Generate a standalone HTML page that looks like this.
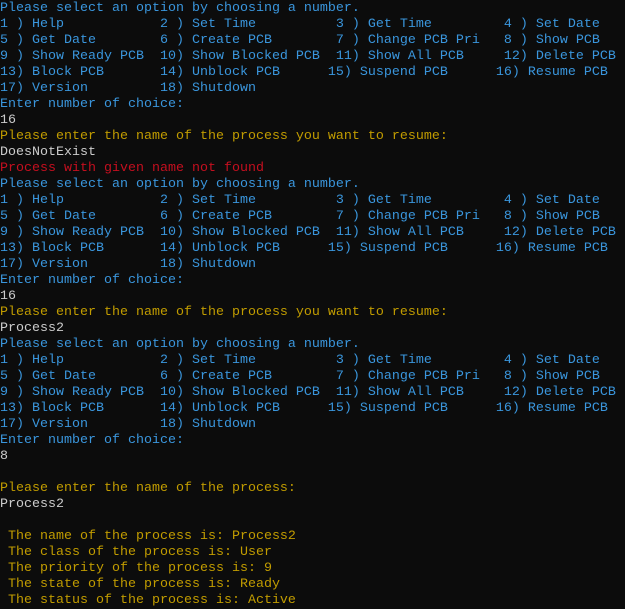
<!DOCTYPE html>
<html><head><style>
html,body{margin:0;padding:0;background:#0c0c0c;width:625px;height:608px;overflow:hidden}
pre{margin:0;position:absolute;top:1px;left:0;font-family:"Liberation Mono",monospace;font-size:13.33px;line-height:16px;color:#3a96dd}
.w{color:#cccccc}.y{color:#c19c00}.r{color:#c50f1f}
</style></head><body><pre>Please select an option by choosing a number.
1 ) Help            2 ) Set Time          3 ) Get Time         4 ) Set Date
5 ) Get Date        6 ) Create PCB        7 ) Change PCB Pri   8 ) Show PCB
9 ) Show Ready PCB  10) Show Blocked PCB  11) Show All PCB     12) Delete PCB
13) Block PCB       14) Unblock PCB      15) Suspend PCB      16) Resume PCB
17) Version         18) Shutdown
Enter number of choice:
<span class="w">16</span>
<span class="y">Please enter the name of the process you want to resume:</span>
<span class="w">DoesNotExist</span>
<span class="r">Process with given name not found</span>
Please select an option by choosing a number.
1 ) Help            2 ) Set Time          3 ) Get Time         4 ) Set Date
5 ) Get Date        6 ) Create PCB        7 ) Change PCB Pri   8 ) Show PCB
9 ) Show Ready PCB  10) Show Blocked PCB  11) Show All PCB     12) Delete PCB
13) Block PCB       14) Unblock PCB      15) Suspend PCB      16) Resume PCB
17) Version         18) Shutdown
Enter number of choice:
<span class="w">16</span>
<span class="y">Please enter the name of the process you want to resume:</span>
<span class="w">Process2</span>
Please select an option by choosing a number.
1 ) Help            2 ) Set Time          3 ) Get Time         4 ) Set Date
5 ) Get Date        6 ) Create PCB        7 ) Change PCB Pri   8 ) Show PCB
9 ) Show Ready PCB  10) Show Blocked PCB  11) Show All PCB     12) Delete PCB
13) Block PCB       14) Unblock PCB      15) Suspend PCB      16) Resume PCB
17) Version         18) Shutdown
Enter number of choice:
<span class="w">8</span>

<span class="y">Please enter the name of the process:</span>
<span class="w">Process2</span>

<span class="y"> The name of the process is: Process2
 The class of the process is: User
 The priority of the process is: 9
 The state of the process is: Ready
 The status of the process is: Active</span>
</pre></body></html>
